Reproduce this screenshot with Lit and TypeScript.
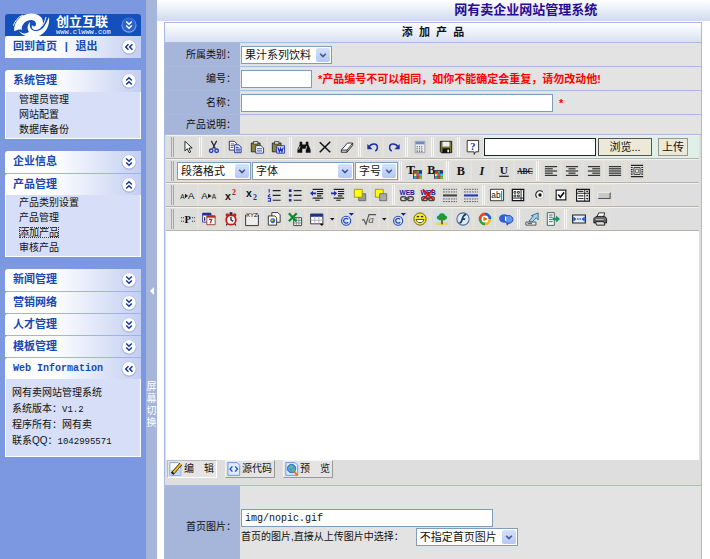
import { LitElement, html, css, svg, TemplateResult } from "lit";
import { customElement, property } from "lit/decorators.js";

/* ---------- icon artwork, all on a 16 x 16 grid ---------- */

const swatch = svg`<path fill="#333" d="M7 7h10v10H7z"/><path fill="#e22" d="M8 8h3v3H8z"/><path fill="#2c2" d="M11 8h3v3h-3z"/><path fill="#22e" d="M14 8h3v3h-3z"/><path fill="#ee2" d="M8 11h3v3H8z"/><path fill="#e2e" d="M11 11h3v3h-3z"/><path fill="#2dd" d="M14 11h3v3h-3z"/><path fill="#2ad" d="M8 14h3v3H8z"/><path fill="#e33" d="M11 14h3v3h-3z"/><path fill="#7c2" d="M14 14h3v3h-3z"/>`;
const serif = (s: string, x: number, y: number, size: number, fill = "#111") =>
  svg`<text x=${x} y=${y} font-family="Liberation Serif, serif" font-weight="bold" font-size=${size} fill=${fill}>${s}</text>`;
const lines = (rows: [number, number][]) =>
  svg`<g stroke="#333" stroke-width="1.4">${rows.map(([a, b], i) => svg`<path d=${`M${a} ${3 + i * 2.5}H${b}`}/>`)}</g>`;
const chain = svg`<g fill="none" stroke="#444" stroke-width="1.5"><rect x="0.8" y="10" width="6.5" height="4.5" rx="2.2"/><rect x="8.7" y="10" width="6.5" height="4.5" rx="2.2"/><path d="M5 12.2h6"/></g>`;
const web = svg`<text x="-0.500" y="7.500" font-family="Liberation Sans, sans-serif" font-weight="bold" font-size="7.500" fill="#1a1a9c">WEB</text>`;
const copyright = svg`<circle cx="7" cy="10" r="5.2" fill="#dce6fa" stroke="#2448b0" stroke-width="1.3"/><path d="M9.3 8.4A2.8 2.8 0 1 0 9.3 11.6" fill="none" stroke="#2448b0" stroke-width="1.5"/><path fill="#1a1a9c" d="M10 1h6l-3 3.4z"/>`;
const clip = svg`<path fill="#8a8438" stroke="#222" d="M1.5 3.5h10v10h-10z"/><path fill="#ddd" stroke="#222" stroke-width=".8" d="M4 1.8h5v3H4z"/>`;
const dottedRule = (mid: string) =>
  svg`<g stroke="#555" stroke-dasharray="2 1"><path d="M0 1.5h16M0 4.5h16M0 12.5h16M0 15.5h16"/></g><path d="M0 8.5h16" stroke=${mid} stroke-width="2.4"/>`;

const ICONS: Record<string, TemplateResult | ReturnType<typeof svg>> = {
  pointer: svg`<path d="M4.5 1.5v11l2.7-2.6 2 4.6 1.8-.8-2-4.5h3.8z" fill="#fff" stroke="#111"/>`,
  cut: svg`<path d="M5 1l4.5 9M11 1L6.500 10" stroke="#223" stroke-width="1.4"/><g fill="none" stroke="#2a3fb0" stroke-width="1.6"><circle cx="4.8" cy="12.3" r="2"/><circle cx="11" cy="12.300" r="2"/></g>`,
  copy: svg`<path d="M1.500 1.500h6l2 2v8h-8z" fill="#fff" stroke="#223"/><path d="M3 4.500h4M3 6.500h4M3 8.500h3" stroke="#445"/><path d="M7.500 5.500h5l2.500 2.500v6.500H7.500z" fill="#dde4fb" stroke="#1f2f90"/><path d="M9 8.500h3M9 10.500h5M9 12.500h5" stroke="#1f2f90"/>`,
  paste: svg`${clip}<path d="M6.500 6.500h6l3 2.500v6h-9z" fill="#fff" stroke="#1f2f90"/><path d="M8 10h6M8 12.500h6" stroke="#1f2f90"/>`,
  pasteWord: svg`${clip}<path d="M6.500 6.500h9v8.500h-9z" fill="#dfe6ff" stroke="#1f2f90"/><path d="M8 8.500l1.500 5 1.500-4 1.500 4 1.500-5" fill="none" stroke="#1f2fc0" stroke-width="1.400"/>`,
  find: svg`<path fill="#111" d="M3 2h3v3h4V2h3v3l2.500 6v3.500h-5.500V10H6v4.500H.5V11L3 5z"/><path stroke="#ddd" d="M3.500 7l-1.500 4M11 7l-1 4"/>`,
  remove: svg`<path d="M2 2.500l12 11.500M14 2L2 14" stroke="#111" stroke-width="1.700"/>`,
  eraser: svg`<path d="M1.500 11.500L8.500 3.500h6L8 11.500z" fill="#fff" stroke="#222"/><path d="M1.500 11.500v2.500H8l6.500-8v-2.500M8 11.500V14" fill="none" stroke="#222"/>`,
  undo: svg`<path d="M3.500 8C6 3.500 13 3.500 13 8.500c0 2-1 3.500-2.500 4" fill="none" stroke="#1f2fa0" stroke-width="1.700"/><path fill="#1f2fa0" d="M1.500 4.500v6h6z"/>`,
  redo: svg`<path d="M12.500 8C10 3.500 3 3.500 3 8.500c0 2 1 3.500 2.500 4" fill="none" stroke="#1f2fa0" stroke-width="1.700"/><path fill="#1f2fa0" d="M14.500 4.500v6h-6z"/>`,
  calc: svg`<path d="M2.500 1.500h11v13h-11z" fill="#f3f3f3" stroke="#99a"/><path fill="#6a8cc8" d="M3 2h10v3H3z"/><g stroke="#556" stroke-dasharray="1.500 1.200"><path d="M4 7.500h8M4 9.500h8M4 11.500h8M4 13.200h8"/></g>`,
  save: svg`<path d="M1.500 1.500h13v13h-12l-1-1z" fill="#77762a" stroke="#111"/><path fill="#eee" d="M4 2h8v5.500H4z"/><path fill="#111" d="M4 9.500h8.500V15H4z"/><path fill="#eee" d="M9.500 11h2v3h-2z"/>`,
  help: svg`<path d="M2.500.5h13v13H12l-1.500 3v-3h-8z" fill="#fff" stroke="#222"/>${serif("?", 6, 11.5, 12, "#1f2fa0")}`,
  fore: svg`${serif("T", -1, 11, 15)}${swatch}`,
  back: svg`${serif("B", -1, 11, 14)}${swatch}`,
  bold: serif("B", 3, 13, 14),
  italic: svg`<text x="5" y="13" font-family="Liberation Serif, serif" font-weight="bold" font-style="italic" font-size="14" fill="#111">I</text>`,
  underline: svg`${serif("U", 3, 11.5, 13)}<path d="M2.500 14h11" stroke="#111" stroke-width="1.300"/>`,
  strike: svg`<text x="-1" y="11.500" font-family="Liberation Serif, serif" font-weight="bold" font-size="8.500" fill="#111">ABC</text><path d="M-1 8.500h18" stroke="#111"/>`,
  left: lines([[1, 15], [1, 10], [1, 15], [1, 10], [1, 15]]),
  center: lines([[1, 15], [4, 12], [1, 15], [4, 12], [1, 15]]),
  right: lines([[1, 15], [6, 15], [1, 15], [6, 15], [1, 15]]),
  justify: lines([[1, 15], [1, 15], [1, 15], [1, 15], [1, 15]]),
  absolute: svg`<path d="M1 1.500h14M1 14.500h14M1 4h2M1 6.500h2M1 9h2M1 11.500h2M13 4h2M13 6.500h2M13 9h2M13 11.500h2" stroke="#222" stroke-width="1.300"/><path d="M4.500 4h7v8h-7z" fill="#ddd" stroke="#333"/><path d="M6.500 6h3v4h-3z" fill="#fff" stroke="#555"/>`,
  bigger: svg`<g font-family="Liberation Sans, sans-serif" fill="#111"><text x="-1" y="12" font-size="7.500">A</text><text x="8" y="12" font-size="11">A</text></g><path fill="#111" d="M4.500 6.500l3.500 2.500-3.500 2.500z"/>`,
  smaller: svg`<g font-family="Liberation Sans, sans-serif" fill="#111"><text x="-1" y="12" font-size="11">A</text><text x="11" y="12" font-size="7.500">A</text></g><path fill="#111" d="M7 6.500l4 2.500-4 2.500z"/>`,
  sup: svg`<text x="1" y="14" font-family="Liberation Sans, sans-serif" font-weight="bold" font-size="12" fill="#111">x</text>${serif("2", 9, 8, 9, "#b01818")}`,
  sub: svg`<text x="1" y="10" font-family="Liberation Sans, sans-serif" font-weight="bold" font-size="12" fill="#111">x</text>${serif("2", 9, 14, 9, "#1f2fa0")}`,
  ol: svg`<path d="M2.500 1v4M1 9.500L3.500 7M1 10h3M1 12h3v3H1" fill="none" stroke="#1f2fa0" stroke-width="1.200"/><path d="M6.500 3h9M6.500 8.500h9M6.500 14h9" stroke="#222" stroke-width="1.300"/>`,
  ul: svg`<path fill="#1f2fa0" d="M1 1.500h3v3H1zM1 7h3v3H1zM1 12.500h3v3H1z"/><path d="M6.500 3h9M6.500 8.500h9M6.500 14h9" stroke="#222" stroke-width="1.300"/>`,
  outdent: svg`<path d="M3 1.500h12M8 4h7M8 6.500h7M8 9h5M3 11.500h12M6 14h5" stroke="#222" stroke-width="1.400"/><path fill="#1f2fa0" d="M0 6l3.500-3v2H7v2H3.500v2z"/>`,
  indent: svg`<path d="M3 1.500h12M8 4h7M8 6.500h7M8 9h5M3 11.500h12M6 14h5" stroke="#222" stroke-width="1.400"/><path fill="#1f2fa0" d="M7 6L3.500 3v2H0v2h3.500v2z"/>`,
  forward: svg`<path fill="#999" stroke="#666" d="M6.500 6.500h8v8h-8z"/><path fill="#ff0" stroke="#998a20" d="M1.500 1.500h9v9h-9z"/>`,
  backward: svg`<path fill="#ff0" stroke="#998a20" d="M1.500 1.500h9v9h-9z"/><path fill="#aaa" stroke="#666" d="M6.500 6.500h8v8h-8z"/>`,
  link: svg`${web}${chain}`,
  unlink: svg`${web}${chain}<path d="M2 1.500l12 12M14 1.500l-12 12" stroke="#d81010" stroke-width="2.200"/>`,
  rule: dottedRule("#444"),
  ruleBlue: dottedRule("#2438c8"),
  textBox: svg`<path d="M.5 1.500h15v13H.5z" fill="#fff" stroke="#222"/><text x="1.500" y="11.500" font-family="Liberation Sans, sans-serif" font-size="9.500" fill="#111">ab|</text>`,
  textArea: svg`<path d="M1.500 1.500h13v13h-13z" fill="#fff" stroke="#111" stroke-width="1.400"/><path d="M11.500 2v12M2 11.500h12" stroke="#111"/><path d="M3.500 4h2v2h-2zM7.500 4h2v2h-2zM3.500 8h2v2h-2zM7.500 8h2v2h-2z" fill="none" stroke="#222"/>`,
  radio: svg`<circle cx="8" cy="8" r="4.500" fill="#f6f6f6" stroke="#bbb"/><path d="M4.500 11A4.500 4.500 0 0 1 11 4.500" fill="none" stroke="#222" stroke-width="1.300"/><circle cx="8" cy="8" r="1.900" fill="#111"/>`,
  check: svg`<path d="M2.500 2.500h11v11h-11z" fill="#fff" stroke="#222" stroke-width="1.400"/><path d="M4.800 7.500l2.500 3 4.200-5.500" fill="none" stroke="#111" stroke-width="1.900"/>`,
  selectBox: svg`<path d="M.7 1.500h14.600v13.500H.7z" fill="#fff" stroke="#111" stroke-width="1.300"/><path d="M1 6h14M10 2v13" stroke="#111"/><path d="M2.500 3.800h6M2.500 9h6M2.500 12h6" stroke="#333" stroke-width="1.300"/><path fill="#111" d="M11 3h3.500l-1.700 2zM11 9.500h3.500L12.800 7.500zM11 11.500h3.500l-1.700 2z"/>`,
  button: svg`<path d="M1 5.500h14v6.500H1z" fill="#c8c8c8"/><path d="M1 12h14V5" fill="none" stroke="#555" stroke-width="1.300"/><path d="M1 12V5h14" fill="none" stroke="#eee"/>`,
  para: svg`${serif("P", 4, 12.5, 12)}<path d="M0 6.500h1.200M0 10.500h1.200M2.200 6.500h1.200M2.200 10.500h1.200M12.500 6.500h1.200M12.500 10.500h1.200M14.700 6.500h1.200M14.700 10.500h1.200" stroke="#333" stroke-width="1.200"/>`,
  date: svg`<path d="M.7 1.500h9.500v10H.7z" fill="#fff" stroke="#1f2f90"/><path fill="#1f2f90" d="M.7 1h9.500v3H.7z"/><path d="M3 6v4" stroke="#1f2f90" stroke-width="1.500"/><path d="M5.500 4.500H15v10H5.500z" fill="#fff" stroke="#832"/><path fill="#a82c20" d="M5.500 4H15v2.500H5.500z"/><path d="M8 8.500h3l-1.500 4.500" fill="none" stroke="#c22" stroke-width="1.500"/>`,
  clock: svg`<circle cx="3.800" cy="3.500" r="2" fill="#c22"/><circle cx="12.200" cy="3.500" r="2" fill="#c22"/><path d="M7 1h2v2H7zM4 13l-1.500 2.500M12 13l1.500 2.500" stroke="#222" stroke-width="1.300"/><circle cx="8" cy="9" r="5.500" fill="#eee" stroke="#c81818" stroke-width="2"/><path d="M8 5.500V9l2.500 1.500" fill="none" stroke="#111" stroke-width="1.300"/>`,
  fieldset: svg`<path d="M2 3.500H.7v12h14.600v-12H14" fill="#eee" stroke="#222"/><text x="1" y="6" font-family="Liberation Sans, sans-serif" font-size="7" fill="#111">XYZ</text>`,
  frame: svg`<path d="M5.500.7h7l2.500 2.500v8.500H5.500z" fill="#fff" stroke="#222"/><path d="M1.500 4.500h7.500l2 2v8.500H1.500z" fill="#fdfbe0" stroke="#222"/><circle cx="6.500" cy="10" r="2.800" fill="#2a62d0"/><path fill="#e8d820" d="M5 8.500h2v2H5z"/>`,
  excel: svg`<path d="M6.500 6.500h9v9h-9z" fill="#fff" stroke="#333"/><path d="M6.500 9.500h9M6.500 12.500h9M9.500 6.500v9M12.500 6.500v9" stroke="#666" stroke-width=".8"/><path d="M1 1.500l8.500 9M10 1.500L1 10.500" stroke="#138a28" stroke-width="2.600"/>`,
  table: svg`<path d="M.7 2.500h14v11H.7z" fill="#fff" stroke="#223"/><path fill="#1f2f90" d="M.7 2h14v3.500H.7z"/><path d="M1 9.500h14M5.500 5v8M10 5v8" stroke="#aab"/><path fill="#111" d="M11 13.500h5l-2.500 2.500z"/>`,
  copyright,
  root: svg`<path d="M0 9.500l2-1 2.500 5.500L8 3h8" fill="none" stroke="#555" stroke-width="1.300"/><text x="7" y="13" font-family="Liberation Serif, serif" font-style="italic" font-size="13" fill="#555">a</text>`,
  smile: svg`<circle cx="8" cy="8" r="7" fill="#ffee20" stroke="#5c5400"/><path d="M3.500 8.500h9c-.5 5-8.500 5-9 0z" fill="#fff" stroke="#333"/><path d="M4.500 6Q5.500 3.500 6.800 6M9.200 6Q10.500 3.500 11.500 6" fill="none" stroke="#222" stroke-width="1.200"/>`,
  picture: svg`<path fill="#bfe4f4" d="M1 1h14v14H1z"/><path fill="#e8d860" d="M1 12h14v3H1z"/><path d="M8 8v6" stroke="#8a4a18" stroke-width="2"/><path fill="#2a9430" d="M8 1.500c3 0 3.500 2 3.500 2.500 3 0 3 4.500.5 4.500-1 1.500-3 1-4 .5-1 .5-3 1-4-.5C1.500 8.500 1.500 4 4.500 4c0-.5.5-2.500 3.500-2.500z"/>`,
  flash: svg`<circle cx="8" cy="8" r="7" fill="#dfeaf4" stroke="#456a94" stroke-width="1.200"/><path d="M11.500 3C8 3 7.500 7 6.800 9.500 6.300 11.500 5.500 12.500 4 12.700M7 8h3.500" fill="none" stroke="#16406c" stroke-width="2"/>`,
  media: svg`<circle cx="8" cy="8" r="7.300" fill="#fff"/><path fill="#e04818" d="M8 .7A7.300 7.300 0 0 0 .7 8H4a4 4 0 0 1 4-4z"/><path fill="#2b62c8" d="M8 .7A7.300 7.300 0 0 1 15.300 8H12a4 4 0 0 0-4-4z"/><path fill="#f0b818" d="M15.300 8A7.300 7.300 0 0 1 8 15.300V12a4 4 0 0 0 4-4z"/><path fill="#36a030" d="M8 15.300A7.300 7.300 0 0 1 .7 8H4a4 4 0 0 0 4 4z"/><path fill="#e06010" d="M6.300 5.300v5.400L11 8z"/>`,
  chat: svg`<ellipse cx="6" cy="7.500" rx="6" ry="4.800" fill="#2c62d4"/><ellipse cx="11" cy="8.500" rx="5" ry="4.500" fill="#5c94f0" stroke="#2040a8"/><path fill="#2c50c0" d="M8 12l1 4 3-3.500z"/><path d="M7.500 5v5" stroke="#fff" stroke-width="1.500"/>`,
  upload: svg`<path d="M1 11.500h11.500v3.500H1z" fill="#eee" stroke="#444"/><path d="M3 13.300h5" stroke="#444"/><path d="M4.500 10.500l5-6-2.200-.3L15 1v8l-2-2.500-5 5z" fill="#9cd4f0" stroke="#256" stroke-width=".9"/>`,
  importDoc: svg`<path d="M1.500.7h8v14.600h-8z" fill="#f4f8f6" stroke="#355"/><path d="M3.500 3.500h4M3.500 6h4M3.500 8.500h4M3.500 11h4" stroke="#355"/><path fill="#1f9068" d="M7.500 6.500h4V4l4.500 4-4.500 4V9.500h-4z"/>`,
  fullscreen: svg`<path d="M.7 3.500h14.600v9H.7z" fill="#e4ecff" stroke="#222" stroke-width="1.200"/><path fill="#1a4ae0" d="M1.500 5l3.500 3-3.500 3zM14.500 5L11 8l3.500 3z"/><path d="M6 8h1.500M8.500 8H10" stroke="#1a4ae0" stroke-width="1.500"/>`,
  print: svg`<path d="M4.500 5.500L6.500 1h7l-1.500 4.500" fill="#fff" stroke="#222"/><path d="M1 7.500l2.500-2.500h10l2 2.500v5H1z" fill="#666" stroke="#111"/><path d="M3 11h9.500l1 4H4z" fill="#ddd" stroke="#111"/><path d="M3 8.500h9" stroke="#ccc"/>`,
  edit: svg`<path d="M1 .7h9.500l3 3v11.500H1z" fill="#fff" stroke="#6a9be0"/><path fill="#bcd6fa" d="M2 9h11v5.500H2z"/><path d="M3.500 13.500L13.500 2.500" stroke="#222" stroke-width="4"/><path d="M5 12L13.500 2.500" stroke="#f4c020" stroke-width="2.300"/>`,
  source: svg`<path d="M1 .7h10.500l3 3v11.500H1z" fill="#dfecff" stroke="#5a90e0"/><path d="M6.200 5L3.500 8l2.700 3M9.300 5L12 8l-2.700 3" fill="none" stroke="#1c58c0" stroke-width="1.600"/>`,
  preview: svg`<path d="M1 .7h10.500l3 3v11.500H1z" fill="#dfecff" stroke="#5a90e0"/><path d="M10.500 11l4 4.500" stroke="#e88018" stroke-width="2.500"/><circle cx="7.500" cy="7.500" r="4.800" fill="#4a9ae4" stroke="#2868b8"/><path fill="#68c058" d="M4 6l3-3 2 2-2 3zM8 9l3-2v3l-2 1.500z"/>`,
  down: svg`<path fill="#111" d="M4 6h9l-4.500 5z"/>`,
  chevron: svg`<path d="M3.500 6l4.500 4.500L12.500 6" fill="none" stroke="#44588c" stroke-width="2.600"/>`,
};

@customElement("tool-icon")
class ToolIcon extends LitElement {
  @property() name = "";
  static styles = css`
    :host { display: inline-flex; flex: none; width: 14px; height: 14px; }
    .art { width: 100%; height: 100%; overflow: visible; }
  `;
  render() {
    return html`<svg class="art" viewBox="0 0 16 16" aria-hidden="true">${ICONS[this.name]}</svg>`;
  }
}

/* Round badge with a double chevron: points down, up or left. */
@customElement("fold-badge")
class FoldBadge extends LitElement {
  @property() dir = "down";
  @property({ type: Boolean }) dark = false;
  static styles = css`
    :host { display: inline-flex; flex: none; width: 16px; height: 16px; }
    .art { width: 100%; height: 100%; }
  `;
  render() {
    const turn = { down: 0, left: 90, up: 180 }[this.dir];
    return html`<svg class="art" viewBox="0 0 16 16" aria-hidden="true">
      <circle cx="8" cy="8.300" r="7.500" fill=${this.dark ? "#7fa3ea" : "#a9b4dc"}></circle>
      <circle cx="8" cy="7.700" r="6.700" fill=${this.dark ? "#2c62cc" : "#fff"}></circle>
      <path transform=${`rotate(${turn} 8 8)`} d="M5.200 4.500L8 7.300l2.800-2.800M5.200 8.500L8 11.300l2.800-2.800" fill="none"
        stroke=${this.dark ? "#fff" : "#123a9c"} stroke-width="1.500"></path>
    </svg>`;
  }
}

interface Panel { title: string; dir: string; items?: string[]; info?: [string, string][]; }

const PANELS: Panel[][] = [
  [{ title: "系统管理", dir: "up", items: ["管理员管理", "网站配置", "数据库备份"] }],
  [
    { title: "企业信息", dir: "down" },
    { title: "产品管理", dir: "up", items: ["产品类别设置", "产品管理", "添加产品", "审核产品"] },
  ],
  [
    { title: "新闻管理", dir: "down" },
    { title: "营销网络", dir: "down" },
    { title: "人才管理", dir: "down" },
    { title: "模板管理", dir: "down" },
    { title: "Web Information", dir: "left", info: [["网有卖网站管理系统", ""], ["系统版本：", "V1.2"], ["程序所有：网有卖", ""], ["联系QQ：", "1042995571"]] },
  ],
];

@customElement("side-menu")
class SideMenu extends LitElement {
  static styles = css`
    :host { display: flex; flex-direction: column; gap: 12px; box-sizing: border-box; width: 146px; padding: 14px 5px; background: #7b98e0; font: 10px/15px "Liberation Sans", "Noto Sans CJK SC", sans-serif; color: #111; }
    .brand { display: flex; align-items: center; height: 22px; padding: 0 4px 0 8px; background: #1450bc; color: #fff; border-radius: 3px 3px 0 0; }
    .mark { width: 38px; height: 24px; flex: none; }
    .names { flex: 1; display: flex; flex-direction: column; padding-left: 5px; }
    .cn { font-size: 13px; line-height: 14px; font-weight: bold; white-space: nowrap; }
    .url { font: 7px/7px "Liberation Mono", monospace; }
    .bar { display: flex; align-items: center; justify-content: space-between; box-sizing: border-box; width: 100%; height: 22px; border: 0; padding: 0 4px 0 8px; background: linear-gradient(90deg, #fff 35%, #c3cff2); border-radius: 3px 0 0 0; font: bold 11px/20px "Liberation Mono", "Noto Sans CJK SC", monospace; color: #1848b4; white-space: nowrap; }
    .bar.latin { font-size: 10px; }
    .bar + .bar, .body + .bar { border-top: 1px solid #a0b2e6; }
    .bar a { color: inherit; text-decoration: none; }
    .quick { display: flex; gap: 6px; }
    .body { background: #d6dff7; border: solid #fff; border-width: 0 1px 1px; }
    .list { margin: 0; padding: 0 0 1px 13px; list-style: none; }
    .list a { color: inherit; text-decoration: none; }
    .list a.on { outline: 1px dotted #333; outline-offset: -1px; }
    .info { padding: 6px 0 7px 6px; line-height: 16px; }
    .info p { height: 16px; margin: 0; }
    .num { font: 9px/16px "Liberation Mono", monospace; }
  `;
  render() {
    return html`
      <div>
        <div class="brand">
          <svg class="mark" viewBox="0 0 38 24" aria-hidden="true">
            <g fill="#fff">
              <path d="M1 18C1 8 8 1 18 .500c8 0 12 4 12 9 0 4-3 7-7 7.500-3 0-5-2-4-5 1 2 4 2 4-1 0-4-5-5-9-3-4 2-6 6-5 9-3-1-4 0-8 1z"/>
              <path d="M6 18c3 3 7 3 10 1-2-3-2-7 1-10-1 5 1 9 6 9 7 0 10-7 13-14 1 8-3 16-10 19-7 2-16 1-20-5z"/>
            </g>
            <g fill="none" stroke="#fff" stroke-width="1">
              <path d="M0 13C2 8 5 4 10 2M33 4c-1 4-2 7-4 9"/>
            </g>
          </svg>
          <span class="names"><span class="cn">创立互联</span><span class="url">www.clwww.com</span></span>
          <fold-badge dir="down" dark></fold-badge>
        </div>
        <div class="bar"><span class="quick"><a href="#home">回到首页</a><span>|</span><a href="#exit">退出</a></span><fold-badge dir="left"></fold-badge></div>
      </div>
      ${PANELS.map((group) => html`<div>${group.map((p) => html`
        <button type="button" class="bar ${p.info ? "latin" : ""}"><span>${p.title}</span><fold-badge dir=${p.dir}></fold-badge></button>
        ${p.items ? html`<div class="body"><ul class="list">${p.items.map((t) => html`<li><a href="#item" class=${t === "添加产品" ? "on" : ""}>${t}</a></li>`)}</ul></div>` : ""}
        ${p.info ? html`<div class="body info">${p.info.map(([a, b]) => html`<p>${a}<span class="num">${b}</span></p>`)}</div>` : ""}
      `)}</div>`)}
    `;
  }
}

const fieldStyles = css`
  .field { box-sizing: border-box; height: 18px; margin: 0; border: 1px solid #7f9db9; border-radius: 0; padding: 0 3px; background: #fff; color: #111; font: 10px/16px "Liberation Mono", "Noto Sans CJK SC", monospace; outline: 0; }
  .pick { display: inline-grid; grid-template-columns: 1fr 16px; align-items: center; box-sizing: border-box; height: 18px; border: 1px solid #7f9db9; background: #fff; }
  .pick select { grid-area: 1 / 1 / 2 / 3; width: 100%; height: 16px; margin: 0; border: 0; padding: 0 0 0 3px; appearance: none; background: transparent; color: #111; font: 11px/16px "Liberation Sans", "Noto Sans CJK SC", sans-serif; outline: 0; }
  .drop { grid-area: 1 / 2 / 2 / 3; display: flex; align-items: center; justify-content: center; height: 14px; margin: 0 1px; background: linear-gradient(#d5e0fc, #b4c8f6); border-radius: 2px; pointer-events: none; }
  .drop tool-icon { width: 10px; height: 10px; }
`;

const pick = (label: string, text: string, cls: string, id = "") => html`
  <span class="pick ${cls}"><select id=${id} aria-label=${label}><option>${text}</option></select><span class="drop"><tool-icon name="chevron"></tool-icon></span></span>`;

@customElement("rich-editor")
class RichEditor extends LitElement {
  static styles = [fieldStyles, css`
    :host { display: block; background: #dedede; padding: 0 2px 0 1px; font: 11px/16px "Liberation Sans", "Noto Sans CJK SC", sans-serif; color: #111; }
    .bar { display: flex; align-items: center; gap: 1px; box-sizing: border-box; height: 24px; padding-left: 5px; border-top: 1px solid #f4f2ec; border-bottom: 1px solid #b4b2aa; }
    .grip { width: 1px; height: 20px; margin-right: 2px; border: solid; border-width: 0 1px; border-color: #f6f6f6 #a8a69e; }
    .group { display: flex; }
    .tool { display: flex; align-items: center; justify-content: center; box-sizing: border-box; width: 21px; height: 22px; border: 1px solid #e5e3d9; padding: 0; background: #dddddb; }
    .more { width: 9px; }
    .more tool-icon { width: 8px; height: 8px; }
    .sep { box-sizing: border-box; width: 3px; height: 20px; border: solid; border-width: 0 1px; border-color: #b4b2aa #f6f6f6; }
    .style { width: 74px; }
    .face { width: 102px; }
    .size { width: 43px; }
    .send { display: flex; align-items: center; flex: 1; gap: 2px; height: 22px; padding-left: 1px; background: #dff0ea; }
    .path { width: 112px; border: 1px solid #222; }
    .push { box-sizing: border-box; height: 18px; border: 1px solid #555; padding: 0 6px; background: #ece9d8; color: #111; font: inherit; line-height: 14px; }
    .browse { width: 54px; }
    .submit { width: 30px; margin-left: 4px; padding: 0; border-color: #99978a; }
    .page { display: block; box-sizing: border-box; width: 100%; height: 229px; border: 0; margin: 0; padding: 4px; resize: none; background: #fff; outline: 0; }
    .modes { display: flex; gap: 8px; height: 25px; padding-left: 1px; }
    .mode { display: flex; align-items: center; gap: 1px; height: 18px; border: 1px solid #f4f4f4; border-right-color: #999; border-bottom-color: #999; padding: 0 2px 0 1px; background: #e4e4e4; color: #111; font: inherit; font-size: 10px; white-space: pre; }
    .mode.on { border-color: #bbb #fff #fff #bbb; }
  `];

  private group(names: string[]) {
    return html`<div class="group">${names.map((n) => html`<button type="button" class="tool ${n === "down" ? "more" : ""}" aria-label=${n}><tool-icon name=${n}></tool-icon></button>`)}</div>`;
  }
  private run(spec: string) {
    return spec.split(" ").map((part) => (part === "/" ? html`<span class="sep"></span>` : this.group(part.split("+"))));
  }

  render() {
    return html`
      <div class="bar"><span class="grip"></span>${this.run("pointer / cut+copy paste+pasteWord / find+remove eraser / undo+redo / calc / save / help")}
        <div class="send"><input class="field path" type="text" aria-label="文件"><button type="button" class="push browse">浏览...</button><button type="button" class="push submit">上传</button></div>
      </div>
      <div class="bar"><span class="grip"></span>${pick("段落格式", "段落格式", "style")}${pick("字体", "字体", "face")}${pick("字号", "字号", "size")}${this.run("/ fore+back / bold+italic underline+strike / left+center right+justify absolute")}</div>
      <div class="bar"><span class="grip"></span>${this.run("bigger+smaller sup+sub ol+ul outdent+indent forward+backward / link+unlink rule+ruleBlue / textBox+textArea radio+check selectBox+button")}</div>
      <div class="bar"><span class="grip"></span>${this.run("para+date clock+fieldset frame+excel table+down+copyright root+down+copyright+smile picture+flash media+chat / upload+importDoc / fullscreen+print")}</div>
      <textarea class="page" aria-label="产品说明"></textarea>
      <div class="modes">
        <button type="button" class="mode on"><tool-icon name="edit"></tool-icon>编　辑</button>
        <button type="button" class="mode"><tool-icon name="source"></tool-icon>源代码</button>
        <button type="button" class="mode"><tool-icon name="preview"></tool-icon>预　览</button>
      </div>
    `;
  }
}

@customElement("app-root")
class AppRoot extends LitElement {
  static styles = [fieldStyles, css`
    :host { display: flex; min-height: 100vh; background: #fff; font: 10px/14px "Liberation Sans", "Noto Sans CJK SC", sans-serif; color: #111; }
    .split { display: flex; flex-direction: column; align-items: center; gap: 86px; flex: none; box-sizing: border-box; width: 11px; border: 0; padding: 287px 0 0; background: #a6b5da; color: #fff; font: 10px/12px "Liberation Sans", "Noto Sans CJK SC", sans-serif; justify-content: flex-start; }
    .split svg { width: 4px; height: 8px; }
    .split span { width: 10px; }
    .main { display: flex; flex-direction: column; flex: 1; min-width: 0; }
    .top { display: grid; grid-template-columns: 1fr 2fr; height: 21px; background: linear-gradient(#fff, #d0daee); }
    .top h1 { grid-column: 2; margin: 0; text-align: center; font-size: 13px; line-height: 19px; color: #2a0a94; }
    .form { display: flex; flex-direction: column; flex: 1; margin: 1px 8px 0 7px; border: solid #a9b9e2; border-width: 1px 1px 0; background: #e3e3e3; }
    .form h2 { box-sizing: border-box; height: 20px; margin: 0; border-bottom: 1px solid #a9b9e2; background: linear-gradient(#fff, #d8e0f2); text-align: center; font-size: 11px; line-height: 18px; white-space: pre; }
    .row { display: grid; grid-template-columns: 75px 1fr; box-sizing: border-box; border-bottom: 1px solid #a9b9e2; min-height: 24px; }
    .row .name { border-right: 0; }
    .row.short { min-height: 20px; }
    .row.last { flex: 1; min-height: 82px; border: 0; }
    .name { display: flex; align-items: center; justify-content: flex-end; padding-right: 4px; background: #a6b5da; }
    .value { display: flex; align-items: center; gap: 6px; padding-left: 1px; }
    .stack { display: flex; flex-direction: column; align-items: flex-start; gap: 1px; padding: 23px 0 12px 1px; }
    .line { display: flex; align-items: center; gap: 12px; }
    .warn { color: #f00; font-size: 11px; font-weight: bold; white-space: nowrap; }
    .kind { width: 91px; }
    .code { width: 71px; }
    .title { width: 312px; }
    .image { width: 252px; }
    .choose { width: 102px; }
    rich-editor { border-bottom: 1px solid #a9b9e2; }
  `];
  render() {
    return html`
      <side-menu></side-menu>
      <button type="button" class="split"><svg viewBox="0 0 4 8" aria-hidden="true"><path fill="#fff" d="M4 0v8L0 4z"/></svg><span>屏幕切换</span></button>
      <div class="main">
        <header class="top"><h1>网有卖企业网站管理系统</h1></header>
        <form class="form">
          <h2>添  加  产  品</h2>
          <div class="row"><label class="name" for="kind">所属类别：</label><div class="value">${pick("所属类别", "果汁系列饮料", "kind", "kind")}</div></div>
          <div class="row"><label class="name" for="code">编号：</label><div class="value"><input id="code" class="field code" type="text"><span class="warn">*产品编号不可以相同，如你不能确定会重复，请勿改动他!</span></div></div>
          <div class="row"><label class="name" for="title">名称：</label><div class="value"><input id="title" class="field title" type="text"><span class="warn">*</span></div></div>
          <div class="row short"><span class="name">产品说明：</span><div class="value"></div></div>
          <rich-editor></rich-editor>
          <div class="row last"><label class="name" for="image">首页图片：</label>
            <div class="stack"><input id="image" class="field image" type="text" value="img/nopic.gif">
              <div class="line"><label for="choose">首页的图片,直接从上传图片中选择：</label>${pick("首页图片", "不指定首页图片", "choose", "choose")}</div>
            </div>
          </div>
        </form>
      </div>
    `;
  }
}
